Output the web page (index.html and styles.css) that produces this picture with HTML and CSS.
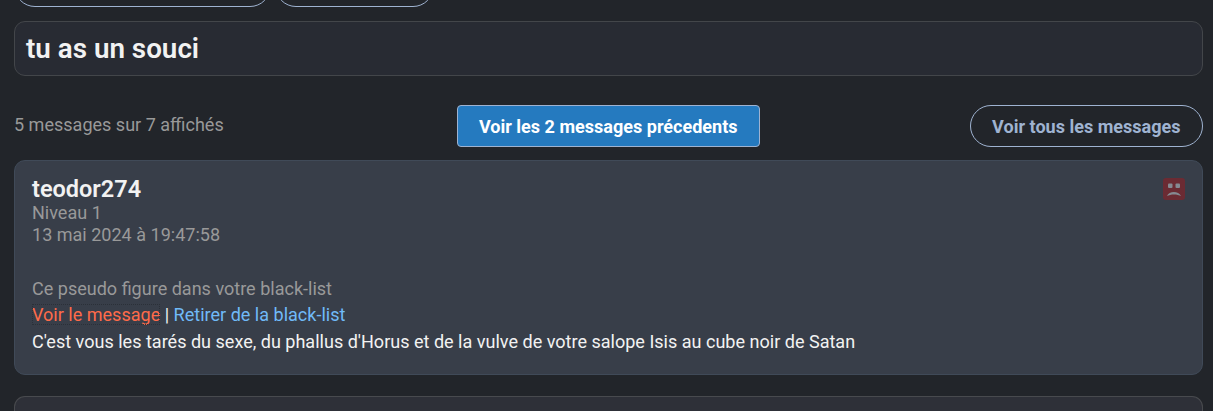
FILE: index.html
```
<!DOCTYPE html>
<html lang="fr">
<head>
    <meta charset="UTF-8">
    <meta name="viewport" content="width=device-width, initial-scale=1.0">
    <title>tu as un souci</title>
    <link rel="stylesheet" href="styles.css">
</head>
<body>
    <div class="thread">
        <div class="top-actions">
            <span class="btn btn-first"></span>
            <span class="btn btn-second"></span>
        </div>

        <h1 class="thread-title">tu as un souci</h1>

        <div class="toolbar">
            <div class="count">5 messages sur 7 affichés</div>
            <button class="btn btn-primary">Voir les 2 messages précedents</button>
            <div class="toolbar-right">
                <button class="btn">Voir tous les messages</button>
            </div>
        </div>

        <div class="message">
            <div class="message-header">
                <div>
                    <div class="author">teodor274</div>
                    <div class="meta">Niveau 1</div>
                    <div class="meta">13 mai 2024 à 19:47:58</div>
                </div>
                <svg class="blacklist-icon" viewBox="0 0 22 22">
                    <rect width="22" height="22" rx="3" fill="#6b2b33"></rect>
                    <rect x="5" y="5.5" width="4.5" height="4.5" rx="1" fill="#858a92"></rect>
                    <rect x="12.5" y="5.5" width="4.5" height="4.5" rx="1" fill="#858a92"></rect>
                    <path d="M4 18C6 12.8 15.6 12.8 18 18C14.5 15.9 7.5 15.9 4 18Z" fill="#858a92"></path>
                </svg>
            </div>
            <div class="message-body">
                <p class="notice">Ce pseudo figure dans votre black-list</p>
                <p><a class="show-link">Voir le message</a> | <a class="remove-link">Retirer de la black-list</a></p>
                <p>C'est vous les tarés du sexe, du phallus d'Horus et de la vulve de votre salope Isis au cube noir de Satan</p>
            </div>
        </div>

        <div class="message message-next"></div>
    </div>
</body>
</html>
```

FILE: styles.css
```
* {
    margin: 0;
    padding: 0;
    box-sizing: border-box;
}

body {
    font-family: Roboto, sans-serif;
    font-size: 18.04px;
    background-color: #22252a;
    color: #f2f2f2;
    height: 100vh;
    overflow: hidden;
}

.thread {
    padding: 0 10.5px 0 14px;
}

/* Buttons */
.btn {
    height: 42px;
    padding: 0 21px;
    background: transparent;
    border: 1px solid #9fb3d1;
    border-radius: 21px;
    font-family: inherit;
    font-size: 18.04px;
    font-weight: 700;
    color: #9fb3d1;
    white-space: nowrap;
}

.btn-primary {
    background: #257abf;
    border-radius: 4px;
    color: white;
}

/* Row scrolled above the top of the window */
.top-actions {
    display: flex;
    align-items: flex-end;
    gap: 4px;
    height: 7px;
    margin-bottom: 14px;
}

.btn-first {
    width: 257px;
}

.btn-second {
    width: 159px;
}

.thread-title {
    height: 55px;
    padding-left: 11px;
    background: #282b33;
    border: 1px solid #43464a;
    border-radius: 11px;
    font-size: 27.8px;
    font-weight: 600;
    line-height: 54px;
}

.toolbar {
    display: grid;
    grid-template-columns: 1fr auto 1fr;
    align-items: center;
    margin: 29px 0 13px;
}

.count {
    color: #999;
    line-height: 22px;
    margin-bottom: 2px;
}

.toolbar-right {
    text-align: right;
}

/* Messages */
.message {
    height: 215px;
    padding: 15px 17px;
    background: #383e49;
    border: 1px solid #404a58;
    border-radius: 11px;
}

.message-header {
    display: flex;
    justify-content: space-between;
    align-items: flex-start;
}

.author {
    font-size: 23.5px;
    font-weight: 600;
    line-height: 26px;
}

.meta {
    color: #999;
    line-height: 22px;
}

.blacklist-icon {
    width: 22px;
    height: 22px;
    margin-top: 2px;
}

.message-body {
    margin-top: 29px;
    line-height: 26.5px;
}

.notice {
    color: #999;
    line-height: 27px;
}

.show-link {
    color: #ff6b4a;
    outline: 1px dotted #2b3038;
    outline-offset: -1px;
}

.remove-link {
    color: #70baf8;
}

/* Only the top of this card is in view */
.message-next {
    height: 15px;
    margin-top: 21px;
    padding: 0;
    background: #2e3038;
    border-color: #484a4e;
    border-bottom: none;
    border-radius: 11px 11px 0 0;
}
```
